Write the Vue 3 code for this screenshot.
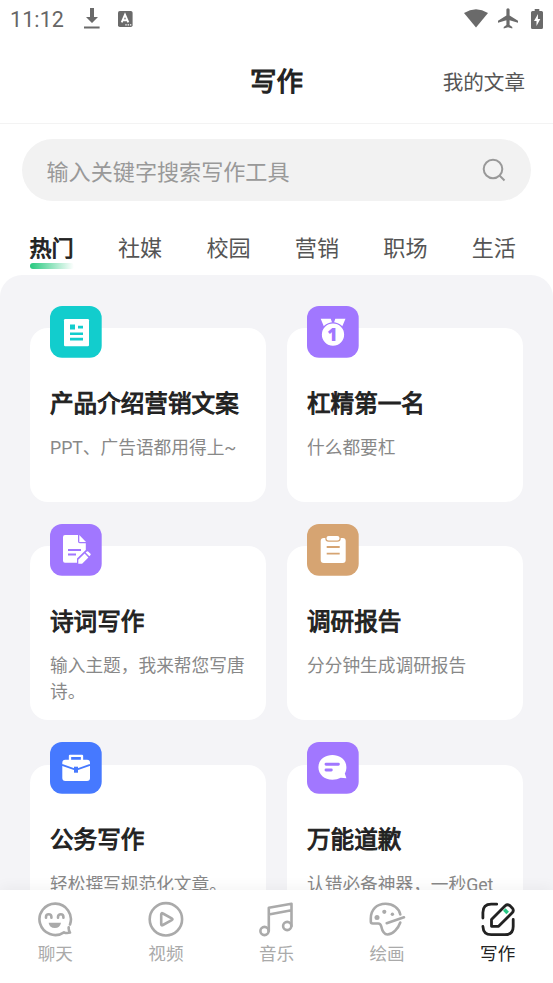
<script setup>
const tabs = ['热门', '社媒', '校园', '营销', '职场', '生活']
const cards = [
  { icon: 'article', color: '#12cdcd', title: '产品介绍营销文案', desc: 'PPT、广告语都用得上~' },
  { icon: 'medal', color: '#a177ff', title: '杠精第一名', desc: '什么都要杠' },
  { icon: 'poem', color: '#a177ff', title: '诗词写作', desc: '输入主题，我来帮您写唐诗。' },
  { icon: 'report', color: '#d6a472', title: '调研报告', desc: '分分钟生成调研报告' },
  { icon: 'case', color: '#4679ff', title: '公务写作', desc: '轻松撰写规范化文章。' },
  { icon: 'talk', color: '#a177ff', title: '万能道歉', desc: '认错必备神器，一秒Get' }
]
const nav = [
  { icon: 'chat', label: '聊天' },
  { icon: 'video', label: '视频' },
  { icon: 'music', label: '音乐' },
  { icon: 'paint', label: '绘画' },
  { icon: 'write', label: '写作', active: true }
]
</script>

<template>
  <div class="screen">
    <div class="status">
      <span class="time">11:12</span>
      <svg class="download" width="16" height="21" viewBox="0 0 16 21">
        <path d="M6 0h4v9h4l-6 6-6-6h4zM0 18.4h15.6v2H0z" fill="#6a6a6a" />
      </svg>
      <svg class="input-mode" width="15" height="16" viewBox="0 0 15 16">
        <rect width="14.6" height="16" rx="1.8" fill="#6a6a6a" />
        <path d="M3.7 11.4 7 3.7l3.3 7.7M5 9.2h4" fill="none" stroke="#fff" stroke-width="1.9" />
        <path d="M7.3 13.8h1.4M9.6 13.8H11M11.9 13.8h1.4" stroke="#fff" stroke-width="1.2" />
      </svg>
      <div class="status-right">
        <svg width="24" height="19" viewBox="0 0 24 19">
          <path d="M0 4Q12-3.4 24 4L12 18.6z" fill="#6a6a6a" />
        </svg>
        <svg width="20" height="21" viewBox="0 0 20 21">
          <path d="M10 .2c1 0 1.6.8 1.6 1.8v5.5L20 12.700v2.100l-8.400-2.600v4.800l2.700 2v1.500L10 19.300l-4.300 1.200V19l2.700-2v-4.800L0 14.800v-2.100l8.400-5.200V2C8.400 1 9 .2 10 .2z" fill="#6a6a6a" />
        </svg>
        <svg width="12" height="20" viewBox="0 0 12 20">
          <path d="M3.700 0h4.600v2H10.500Q12 2 12 3.500v15Q12 20 10.500 20h-9Q0 20 0 18.500v-15Q0 2 1.500 2h2.200z" fill="#6a6a6a" />
          <path d="M7 5 3 12h2.500v5L9.300 10H6.900z" fill="#fff" />
        </svg>
      </div>
    </div>
    <header class="header">
      <span></span>
      <h1>写作</h1>
      <a>我的文章</a>
    </header>
    <div class="search">
      <span>输入关键字搜索写作工具</span>
      <svg width="24" height="24" viewBox="0 0 24 24" fill="none" stroke="#999" stroke-width="2">
        <circle cx="11" cy="11" r="9.300" />
        <path d="m17.500 17.500 5 5" />
      </svg>
    </div>
    <nav class="tabs">
      <div v-for="(t, i) in tabs" :key="t" class="tab" :class="{ on: i === 0 }">{{ t }}</div>
    </nav>
    <main class="panel">
      <article v-for="c in cards" :key="c.title" class="card">
        <svg class="badge" width="52" height="52" viewBox="0 0 52 52">
          <rect width="51.700" height="51.700" rx="12" :fill="c.color" />
          <g v-if="c.icon === 'article'">
            <rect x="14" y="13" width="25" height="27.300" rx="1.200" fill="#fff" />
            <path d="M20 18.400h5v5.200h-5zM28 19.800h5v2.800h-5zM20 26.500h13V29H20zM20 31.700h13v2.700H20z" :fill="c.color" />
          </g>
          <g v-else-if="c.icon === 'medal'" fill="#fff">
            <path d="M13.700 12.700h10l1.400 3.700-8.200 4.200zM28.300 12.700h10.200l-3.300 7.900-8.200-4.200z" />
            <circle cx="26" cy="28.600" r="11.800" :stroke="c.color" stroke-width="1.300" />
            <text x="25.500" y="34.900" text-anchor="middle" :fill="c.color" class="one">1</text>
          </g>
          <g v-else-if="c.icon === 'poem'">
            <path d="M15 11h13v6.500q0 1.800 1.800 1.800h6V26L27 34.600v4.200H15q-2 0-2-2V13q0-2 2-2z" fill="#fff" />
            <path d="M29.300 11 36 18h-6.700z" fill="#fff" />
            <path d="M18 26h13M18 30.500h8" :stroke="c.color" stroke-width="1.800" />
            <path d="m28.300 35.700 6.300-6.200 3.800 3.900-6.300 6.300h-3.800zM35.600 28.500l1.300-1.100q.6-.5 1.200 0l2.400 2.400q.5.600 0 1.200l-1.200 1.300z" fill="#fff" />
          </g>
          <g v-else-if="c.icon === 'report'">
            <rect x="13.700" y="14" width="25" height="25" rx="3" fill="#fff" />
            <rect x="18.900" y="11.400" width="14.200" height="5.800" rx="2.700" fill="#fff" :stroke="c.color" stroke-width="1.200" />
            <path d="M19.700 23h13M19.700 29.600h13" :stroke="c.color" stroke-width="1.800" />
          </g>
          <g v-else-if="c.icon === 'case'">
            <path d="M20 18v-4.200h12V18" fill="none" stroke="#fff" stroke-width="2.300" stroke-linejoin="round" />
            <rect x="12.300" y="17.700" width="27.700" height="21.200" rx="3" fill="#fff" />
            <path d="m12 22.800 14 5 14-5" fill="none" :stroke="c.color" stroke-width="1.900" />
            <rect x="24" y="24.700" width="4" height="6" :fill="c.color" />
          </g>
          <g v-else>
            <path d="M25.400 13c8 0 14 5.200 14 12.200 0 2.600-.6 4.400-1.600 6.300l1.600 4.800-5.700-.6c-2.400 1.300-5 2-8.300 2-8 0-14-5.400-14-12.500S17.400 13 25.400 13z" fill="#fff" />
            <path d="M19 22.200h12.400M19 28h5.300" :stroke="c.color" stroke-width="2.900" stroke-linecap="round" />
          </g>
        </svg>
        <h2>{{ c.title }}</h2>
        <p>{{ c.desc }}</p>
      </article>
    </main>
    <footer class="bottom">
      <div v-for="n in nav" :key="n.icon" class="item" :class="{ active: n.active }">
        <svg width="38" height="38" viewBox="0 0 38 38" fill="none" stroke="currentColor" stroke-width="2.600" stroke-linecap="round" stroke-linejoin="round">
          <g v-if="n.icon === 'chat'">
            <path d="M34 24.500A15.700 15.700 0 1 0 28 32.300q2.500 1.300 6 .3-1.600-2.400-1.300-5.200" />
            <path d="M10 17.700v-.8a2.700 2.700 0 0 1 5.400 0v.8M22 17.700v-.8a2.700 2.700 0 0 1 5.400 0v.8" />
            <path d="M12.600 22.700H25q-1 5.400-6.200 5.400t-6.200-5.400z" fill="currentColor" stroke="none" />
          </g>
          <g v-else-if="n.icon === 'video'">
            <circle cx="18.900" cy="19.300" r="16.200" />
            <path d="M14.200 14.500q0-2 1.700-1l8.800 4.900q1.600.9 0 1.800L15.900 25q-1.700 1-1.700-1z" />
          </g>
          <g v-else-if="n.icon === 'music'">
            <circle cx="7.500" cy="31" r="4.100" />
            <circle cx="30.200" cy="26" r="4.100" />
            <path d="M11.800 31V7.700l22.700-4V26M11.800 14.500l22.700-4.200" />
          </g>
          <g v-else-if="n.icon === 'paint'">
            <path d="M32.300 14.500C31 8 25 3.800 17.500 3.800 8.500 3.800 2.800 10 2.800 18.500v3q0 2 2 2h5.400q2.400 0 3 2.800c.8 3.700 2.500 8.200 6.200 8.200 5.500 0 11-6.500 12.900-12" />
            <path d="M18.700 23.200 36 17.300" />
            <g fill="currentColor" stroke="none"><circle cx="9" cy="17.600" r="2.500" /><circle cx="16.300" cy="11.800" r="2.100" /><circle cx="24.400" cy="14.300" r="1.700" /></g>
          </g>
          <g v-else stroke-width="2.800">
            <path d="M3.900 18V12.500Q3.900 4.200 12.200 4.200h5.500M3.900 26.500q.4 8.200 8.400 8.200h13.500q8.400 0 8.400-8.200v-7" />
            <path d="M12.500 26.300v-6.800L26.200 5.700q2.300-2 4.800 0l2.200 2.200q2.200 2.500 0 4.900L19.600 26.300z" />
            <path d="m25.300 9.500 3.400 3.400" stroke="#27c985" stroke-width="3.600" stroke-linecap="butt" />
          </g>
        </svg>
        <span>{{ n.label }}</span>
      </div>
    </footer>
  </div>
</template>

<style>
body { margin: 0; overflow: hidden; }
</style>

<style scoped>
* { box-sizing: border-box; }
.screen { width: 553px; height: 983px; overflow: hidden; display: flex; flex-direction: column; background: #fff; color: #222; font-family: Roboto, "Noto Sans CJK SC", sans-serif; }
svg { display: block; flex: none; }
.status { height: 38px; flex: none; display: flex; align-items: center; padding: 0 10px 1px; }
.time { width: 74px; font-size: 21.5px; color: #666; letter-spacing: .1px; padding-top: 1px; }
.input-mode { margin-left: 18px; }
.status-right { margin-left: auto; display: flex; align-items: center; gap: 10px; }
.status-right svg:last-child { margin-left: 3px; }
.header { height: 86px; flex: none; border-bottom: 1px solid #f3f3f3; display: grid; grid-template-columns: 1fr auto 1fr; align-items: center; padding: 0 28px; }
.header h1 { margin: 0; padding-bottom: 2px; font-size: 26.5px; font-weight: 400; -webkit-text-stroke: 1.1px #222; }
.header a { justify-self: end; font-size: 20.6px; color: #555; }
.search { margin: 15px 22px 0; height: 62px; flex: none; border-radius: 31px; background: #f2f2f2; display: flex; align-items: center; justify-content: space-between; padding: 0 25px 0 24.5px; font-size: 22.1px; color: #999; }
.tabs { height: 74px; flex: none; display: flex; justify-content: space-between; padding: 30px 37px 0 29.5px; }
.tab { height: 38px; font-size: 22.1px; line-height: 34px; color: #555; }
.tab.on { color: #222; -webkit-text-stroke: .9px #222; }
.tab.on::after { content: ""; display: block; height: 6px; margin-top: -2px; border-radius: 3px; background: linear-gradient(90deg, #27c97f, #fff); }
.panel { flex: 1; min-height: 0; overflow: hidden; background: #f4f4f7; border-radius: 22px 22px 0 0; padding: 53px 30px 0; display: grid; grid-template-columns: 236px 236px; column-gap: 21px; grid-auto-rows: 174px; row-gap: 44.3px; }
.card { background: #fff; border-radius: 18px; padding: 0 20px; }
.badge { margin-top: -22.5px; }
.card h2 { margin: 29px 0 0; font-size: 23.6px; line-height: 35px; font-weight: 400; -webkit-text-stroke: 1px #222; white-space: nowrap; }
.card p { margin: 13.500px -3px 0 0; font-size: 17.7px; line-height: 26px; color: #888; }
.bottom { height: 93.5px; flex: none; display: grid; grid-template-columns: repeat(5, 1fr); padding-top: 10.5px; background: #fff; box-shadow: 0 -2px 14px rgba(0, 0, 0, .05); position: relative; }
.item { display: flex; flex-direction: column; align-items: center; color: #aaa; font-size: 17.6px; line-height: 26px; gap: 3px; }
.item.active { color: #222; }
.one { font: 800 17.5px "Open Sans", sans-serif; }
</style>
